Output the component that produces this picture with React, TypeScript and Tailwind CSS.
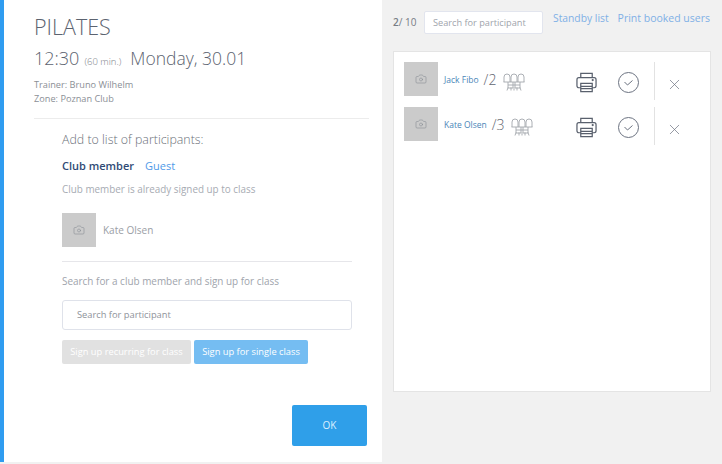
import { Camera, X } from 'lucide-react'

const font = { fontFamily: '"Open Sans", sans-serif' }

function Photo() {
  return (
    <div className="w-[34px] h-[34px] bg-[#cbcbcb] flex items-center justify-center shrink-0">
      <Camera className="w-[12px] h-[12px] text-[#8a8f96]" strokeWidth={1.2} />
    </div>
  )
}

function Printer() {
  return (
    <svg width="21" height="21" viewBox="0 0 22 22" fill="none" stroke="#59606d" strokeWidth="1.3">
      <path d="M5 6V1.500h12V6" />
      <path d="M5 16.500H3a2 2 0 0 1-2-2V8a2 2 0 0 1 2-2h16a2 2 0 0 1 2 2v6.500a2 2 0 0 1-2 2h-2" />
      <path d="M5 12h12v8.500H5z" />
      <path d="M5 15h12M5 17.500h12" />
      <circle cx="17.500" cy="8.500" r="0.5" fill="#59606d" />
    </svg>
  )
}

function Check() {
  return (
    <svg width="21" height="21" viewBox="0 0 21 21" fill="none" stroke="#6b7280" strokeWidth="1">
      <circle cx="10.500" cy="10.500" r="10" />
      <path d="M6.500 10l3 3 5-4.500" />
    </svg>
  )
}

function Seats() {
  return (
    <svg width="22" height="18" viewBox="0 0 22 18" fill="none" stroke="#a3a7ad" strokeWidth="0.9">
      <path d="M1 9V4a3 3 0 0 1 6 0v5M8 9V4a3 3 0 0 1 6 0v5M15 9V4a3 3 0 0 1 6 0v5" />
      <path d="M0.500 9h21" />
      <path d="M5 9v6h5V9M12 9v6h5V9M5 12h12M4 17.500l1-3M8 17.500v-3M11 17.500v-3M14 17.500v-3M18 17.500l-1-3" />
    </svg>
  )
}

function Row({ name, count, nameW }: { name: string; count: string; nameW: string }) {
  return (
    <div className="flex items-center h-[34px]">
      <Photo />
      <div className={`flex items-center ml-[6px] ${nameW}`}>
        <span className="text-[8.500px] text-[#4a86b8] pt-[2px]">{name}</span>
        <span className="text-[14px] text-[#5f6670] font-light ml-[5px]">{count}</span>
      </div>
      <div className="pt-[6px]">
        <Seats />
      </div>
      <div className="flex-1" />
      <div className="mt-[6px]">
        <Printer />
      </div>
      <div className="ml-[21px] mt-[7px]">
        <Check />
      </div>
      <div className="w-px h-[38px] bg-[#e2e2e2] ml-[15px] mt-[4px]" />
      <X className="w-[17px] h-[17px] text-[#6b7280] ml-[11px] mr-[27px] mt-[11px]" strokeWidth={1} />
    </div>
  )
}

export default function App() {
  return (
    <div className="w-[722px] h-[464px] flex overflow-hidden bg-[#f1f1f1]" style={font}>
      <div className="w-[382px] h-[462px] bg-white border-l-[4px] border-[#2f9cf0] pl-[30px] pr-[13px] pt-[12px] shrink-0">
        <h1 className="text-[21.500px] leading-[30px] font-light text-[#5c6370]">PILATES</h1>
        <div className="flex items-baseline mt-[2px] font-light text-[#5c6370] leading-[28px]">
          <span className="text-[18px]">12:30</span>
          <span className="text-[9.500px] ml-[5px] text-[#777c85]">(60 min.)</span>
          <span className="text-[17.500px] ml-[9px]">Monday, 30.01</span>
        </div>
        <div className="mt-[2px] text-[9.200px] leading-[14px] text-[#8b8f96]">
          <p>Trainer: Bruno Wilhelm</p>
          <p>Zone: Poznan Club</p>
        </div>
        <div className="h-px bg-[#ececec] mt-[12px]" />
        <div className="pl-[28px] pr-[17px]">
          <p className="text-[12.400px] leading-[18px] font-light text-[#6b7079] mt-[12px]">Add to list of participants:</p>
          <div className="flex text-[11px] leading-[16px] mt-[9px]">
            <span className="font-semibold text-[#2f4a75]">Club member</span>
            <span className="text-[#4f9ae8] ml-[11px]">Guest</span>
          </div>
          <p className="text-[9.900px] leading-[14px] text-[#a7abb3] mt-[8px]">Club member is already signed up to class</p>
          <div className="flex items-center mt-[17px]">
            <Photo />
            <span className="ml-[7px] text-[10px] text-[#9a9ea5]">Kate Olsen</span>
          </div>
          <div className="h-px bg-[#e6e6ea] mt-[14px]" />
          <p className="text-[9.950px] leading-[14px] text-[#a0a4ac] mt-[12px]">Search for a club member and sign up for class</p>
          <div className="h-[30px] mt-[12px] border border-[#dfe2ea] rounded-[3px] flex items-center pl-[14px] text-[9.300px] text-[#8e929a]">
            Search for participant
          </div>
          <div className="flex gap-[3px] mt-[10px]">
            <button className="w-[129px] h-[24px] rounded-[2px] bg-[#e1e1e1] text-white text-[9.300px]">
              Sign up recurring for class
            </button>
            <button className="w-[114px] h-[24px] rounded-[2px] bg-[#75bdf2] text-white text-[9.300px]">
              Sign up for single class
            </button>
          </div>
        </div>
        <div className="flex justify-end mt-[41px] pr-[2px]">
          <button className="w-[75px] h-[41px] rounded-[2px] bg-[#2f9fe9] text-[#dcefff] text-[10px]">OK</button>
        </div>
      </div>
      <div className="flex-1 pl-[11px] pr-[11px] pt-[1px]">
        <div className="flex items-start h-[48px]">
          <span className="text-[10px] text-[#777c85] mt-[14px] w-[31px] shrink-0">
            <span className="font-semibold">2</span>/ 10
          </span>
          <div className="w-[119px] h-[23px] mt-[10px] bg-white border border-[#e2e5ee] rounded-[2px] flex items-center pl-[8px] text-[9.200px] text-[#a0a4ac] shrink-0">
            Search for participant
          </div>
          <span className="ml-[10px] mt-[10px] text-[10.300px] text-[#7fb0e6] whitespace-nowrap">Standby list</span>
          <span className="ml-[9px] mt-[10px] text-[10.500px] text-[#7fb0e6] whitespace-nowrap">Print booked users</span>
        </div>
        <div className="w-[318px] h-[341px] mt-[2px] bg-white border border-[#e4e4e4] pl-[10px] pt-[10px] flex flex-col gap-[11px]">
          <Row name="Jack Fibo" count="/2" nameW="w-[59px]" />
          <Row name="Kate Olsen" count="/3" nameW="w-[67px]" />
        </div>
      </div>
    </div>
  )
}
